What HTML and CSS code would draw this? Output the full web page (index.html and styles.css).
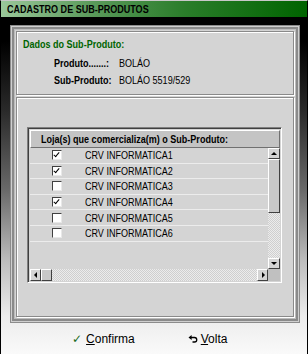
FILE: index.html
```html
<!DOCTYPE html>
<html>
<head>
<meta charset="utf-8">
<link rel="stylesheet" href="styles.css">
</head>
<body>
<div class="window">
  <div class="titlebar"><span class="n">CADASTRO DE SUB-PRODUTOS</span></div>
  <div class="frame">
    <div class="group group-top">
      <div class="group-title"><span class="n">Dados do Sub-Produto:</span></div>
      <div class="field"><span class="label"><span class="n">Produto.......:</span></span><span class="value"><span class="n">BOLÁO</span></span></div>
      <div class="field"><span class="label"><span class="n">Sub-Produto:</span></span><span class="value"><span class="n">BOLÁO 5519/529</span></span></div>
    </div>
    <div class="group group-bottom">
      <div class="grid">
        <div class="grid-body">
          <div class="grid-main">
            <div class="grid-header"><span class="n">Loja(s) que comercializa(m) o Sub-Produto:</span></div>
            <div class="rows-wrap">
              <div class="rows">
                <div class="row"><span class="cell-check"><span class="check on"></span></span><span class="cell-name"><span class="n">CRV INFORMATICA1</span></span></div>
                <div class="row"><span class="cell-check"><span class="check on"></span></span><span class="cell-name"><span class="n">CRV INFORMATICA2</span></span></div>
                <div class="row"><span class="cell-check"><span class="check"></span></span><span class="cell-name"><span class="n">CRV INFORMATICA3</span></span></div>
                <div class="row"><span class="cell-check"><span class="check on"></span></span><span class="cell-name"><span class="n">CRV INFORMATICA4</span></span></div>
                <div class="row"><span class="cell-check"><span class="check"></span></span><span class="cell-name"><span class="n">CRV INFORMATICA5</span></span></div>
                <div class="row"><span class="cell-check"><span class="check"></span></span><span class="cell-name"><span class="n">CRV INFORMATICA6</span></span></div>
              </div>
              <div class="vscroll">
                <div class="sbtn up"></div>
                <div class="thumb-v"></div>
                <div class="track"></div>
                <div class="sbtn down"></div>
              </div>
            </div>
          </div>
        </div>
        <div class="hscroll">
          <div class="sbtn left"></div>
          <div class="thumb-h"></div>
          <div class="track"></div>
          <div class="sbtn right"></div>
          <div class="corner"></div>
        </div>
      </div>
    </div>
  </div>
  <div class="buttons">
    <div class="btn btn-ok"><span class="ico-check">✓</span><span><u>C</u>onfirma</span></div>
    <div class="btn btn-back"><svg class="ico-undo" width="10" height="8" viewBox="0 0 10 8"><path d="M3 2.5 H6.5 A2.2 2.2 0 0 1 6.5 7 H4.5" fill="none" stroke="#000" stroke-width="1.3"/><path d="M0.5 2.5 L3.6 0 L3.6 5 Z" fill="#000"/></svg><span><u>V</u>olta</span></div>
  </div>
</div>
</body>
</html>
```
FILE: styles.css
```css
html, body {
  margin: 0;
  padding: 0;
}
body {
  width: 308px;
  height: 354px;
  overflow: hidden;
  font-family: "Liberation Sans", Arial, sans-serif;
  font-size: 11px;
  color: #000;
}
.n {
  display: inline-block;
  white-space: nowrap;
  transform: scaleX(0.82);
  transform-origin: 0 50%;
}
.window {
  box-sizing: border-box;
  width: 308px;
  height: 354px;
  border-left: 1px solid #000;
  border-right: 1px solid #000;
  border-top: 1px solid #c8c8c8;
  background: linear-gradient(#000 0px, #000 40px, #2a2a2a 110px, #6a6a6a 190px, #bdbdbd 260px, #ececec 315px, #fafafa 354px);
  display: flex;
  flex-direction: column;
}
.titlebar {
  height: 16px;
  line-height: 16px;
  padding-left: 6px;
  font-weight: bold;
  font-size: 11px;
  background: linear-gradient(90deg, #9ac79a 0%, #5a9a5a 30%, #2a7d2a 60%, #006400 100%);
}
.frame {
  margin: 8px 7px 0 9px;
  height: 298px;
  box-sizing: border-box;
  padding: 6px;
  background: #d4d4d4;
  box-shadow: inset 0 0 0 1px #8c8c8c, inset 0 0 0 2px #cfcfcf, inset 0 0 0 4px #8a8a8a, inset 0 0 0 5px #bcbcbc;
  display: flex;
  flex-direction: column;
}
.group {
  border: 1px solid #8a8a8a;
  box-shadow: inset 1px 1px 0 #fff, 1px 1px 0 #fff;
}
.group-top {
  height: 64px;
  box-sizing: border-box;
  padding: 5px 0 0 6px;
}
.group-title {
  color: #006400;
  font-weight: bold;
  height: 17px;
  line-height: 14px;
}
.field {
  display: flex;
  height: 17px;
  align-items: center;
  padding-left: 31px;
}
.label {
  font-weight: bold;
  width: 65px;
  flex: none;
}
.value {
  flex: none;
}
.group-bottom {
  margin-top: 2px;
  flex: 1;
  padding: 29px 11px 0 10px;
}
.grid {
  height: 156px;
  box-sizing: border-box;
  border-top: 1px solid #808080;
  border-left: 1px solid #808080;
  border-right: 1px solid #fff;
  border-bottom: 1px solid #fff;
  box-shadow: inset 1px 1px 0 #404040;
  padding: 2px 1px 1px 2px;
  display: flex;
  flex-direction: column;
  background: #d4d4d4;
}
.grid-body {
  flex: 1;
  display: flex;
}
.grid-main {
  flex: 1;
  display: flex;
  flex-direction: column;
}
.grid-header {
  height: 18px;
  box-sizing: border-box;
  line-height: 16px;
  padding-left: 10px;
  font-weight: bold;
  background: #c4c4c4;
  border: 1px solid #fff;
  border-right-color: #707070;
  border-bottom-color: #707070;
}
.rows-wrap {
  flex: 1;
  display: flex;
}
.rows {
  flex: 1;
}
.row {
  height: 15.6px;
  box-sizing: border-box;
  border-bottom: 1px solid #ececec;
  display: flex;
  align-items: center;
}
.cell-check {
  width: 32px;
  display: flex;
  justify-content: flex-end;
}
.check {
  width: 10px;
  height: 10px;
  box-sizing: border-box;
  background: #fff;
  border: 1px solid #404040;
  border-right-color: #e8e8e8;
  border-bottom-color: #e8e8e8;
  position: relative;
}
.check.on::after {
  content: "";
  position: absolute;
  left: 2px;
  top: 0px;
  width: 2px;
  height: 5px;
  border-right: 1.5px solid #000;
  border-bottom: 1.5px solid #000;
  transform: rotate(40deg);
}
.cell-name {
  padding-left: 23px;
}
.vscroll {
  width: 12px;
  display: flex;
  flex-direction: column;
}
.sbtn {
  width: 12px;
  height: 11px;
  box-sizing: border-box;
  background: #d4d4d4;
  border: 1px solid #fff;
  border-right-color: #404040;
  border-bottom-color: #404040;
  position: relative;
}
.sbtn::after {
  content: "";
  position: absolute;
  width: 0;
  height: 0;
}
.sbtn.up::after {
  left: 2px; top: 3px;
  border-left: 3px solid transparent;
  border-right: 3px solid transparent;
  border-bottom: 3px solid #000;
}
.sbtn.down::after {
  left: 2px; top: 3px;
  border-left: 3px solid transparent;
  border-right: 3px solid transparent;
  border-top: 3px solid #000;
}
.sbtn.left::after {
  left: 3px; top: 2px;
  border-top: 3px solid transparent;
  border-bottom: 3px solid transparent;
  border-right: 3px solid #000;
}
.sbtn.right::after {
  left: 4px; top: 2px;
  border-top: 3px solid transparent;
  border-bottom: 3px solid transparent;
  border-left: 3px solid #000;
}
.thumb-v {
  height: 54px;
  box-sizing: border-box;
  background: #c8c8c8;
  border: 1px solid #fff;
  border-right-color: #404040;
  border-bottom-color: #404040;
}
.track {
  flex: 1;
  background-color: #e4e4e4;
  background-image: repeating-conic-gradient(#cfcfcf 0 25%, #ececec 0 50%);
  background-size: 2px 2px;
}
.hscroll {
  height: 12px;
  display: flex;
}
.hscroll .sbtn {
  width: 11px;
  height: 12px;
}
.thumb-h {
  width: 11px;
  box-sizing: border-box;
  background: #c8c8c8;
  border: 1px solid #fff;
  border-right-color: #404040;
  border-bottom-color: #404040;
}
.corner {
  width: 12px;
  background: #c0c0c0;
}
.buttons {
  flex: 1;
  display: flex;
  align-items: center;
  padding-left: 71px;
  font-size: 12px;
}
.btn {
  display: flex;
  align-items: center;
  gap: 4px;
}
.btn-back {
  margin-left: 53px;
  gap: 3px;
}
.ico-check {
  color: #1a6a1a;
  font-size: 12px;
  font-family: "DejaVu Sans", sans-serif;
}
.ico-undo {
  display: block;
}
```
